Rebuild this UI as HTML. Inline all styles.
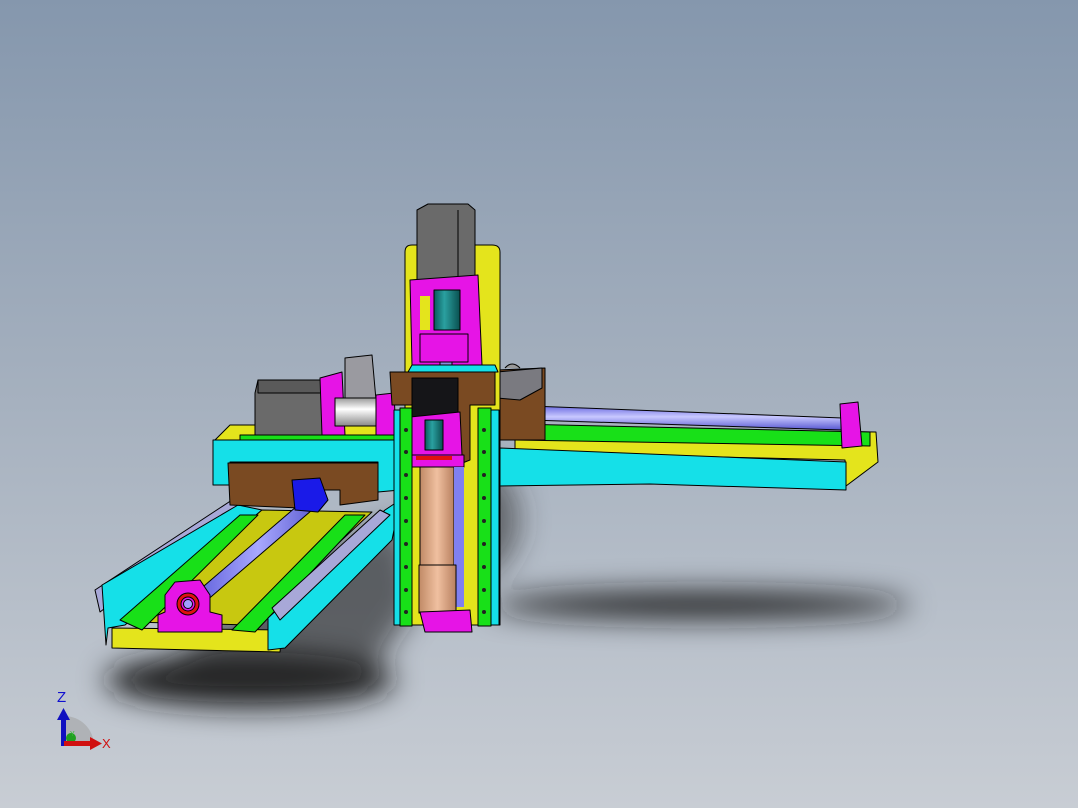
<!DOCTYPE html>
<html><head><meta charset="utf-8"><style>
html,body{margin:0;padding:0;width:1078px;height:808px;overflow:hidden}
svg{display:block}
</style></head><body>
<svg width="1078" height="808" viewBox="0 0 1078 808" xmlns="http://www.w3.org/2000/svg" stroke="#000" stroke-width="1" stroke-linejoin="round">
<defs>
<linearGradient id="bg" x1="0" y1="0" x2="0" y2="1">
<stop offset="0" stop-color="#8597ad"/><stop offset="0.5" stop-color="#a6b1bf"/><stop offset="1" stop-color="#c8cdd4"/></linearGradient>
<filter id="bl" filterUnits="userSpaceOnUse" x="0" y="0" width="1078" height="808"><feGaussianBlur stdDeviation="14"/></filter>
<linearGradient id="rod" x1="0" y1="0" x2="0" y2="1"><stop offset="0" stop-color="#6b6be0"/><stop offset="0.45" stop-color="#c8c8ff"/><stop offset="1" stop-color="#5656d0"/></linearGradient>
<linearGradient id="rod2" x1="0" y1="0" x2="1" y2="0"><stop offset="0" stop-color="#5a5ad8"/><stop offset="0.5" stop-color="#a8a8ff"/><stop offset="1" stop-color="#5050c8"/></linearGradient>
<linearGradient id="cyl" x1="0" y1="0" x2="0" y2="1"><stop offset="0" stop-color="#999"/><stop offset="0.4" stop-color="#fff"/><stop offset="1" stop-color="#888"/></linearGradient>
<linearGradient id="teal" x1="0" y1="0" x2="1" y2="0"><stop offset="0" stop-color="#0a5a5a"/><stop offset="0.4" stop-color="#2aa0a0"/><stop offset="1" stop-color="#0a5050"/></linearGradient>
<linearGradient id="cop" x1="0" y1="0" x2="1" y2="0"><stop offset="0" stop-color="#c08a66"/><stop offset="0.5" stop-color="#f0c0a0"/><stop offset="1" stop-color="#b88060"/></linearGradient>
</defs>
<rect width="1078" height="808" fill="url(#bg)" stroke="none"/>
<!-- shadows -->
<g filter="url(#bl)" stroke="none">
<ellipse cx="250" cy="680" rx="145" ry="28" fill="#1a1a1a" opacity="0.9"/>
<polygon points="130,690 300,560 400,520 420,600 360,690" fill="#1a1a1a" opacity="0.6"/>
<ellipse cx="700" cy="605" rx="210" ry="14" fill="#1a1a1a" opacity="0.9"/>
<ellipse cx="470" cy="520" rx="50" ry="60" fill="#333" opacity="0.6"/>
</g>

<!-- right arm -->
<polygon points="515,428 876,432 878,462 846,486 845,460 515,452" fill="#e4e41c"/>
<polygon points="515,424 870,432 870,446 515,440" fill="#18e018"/>
<polygon points="500,448 846,462 846,490 650,484 498,486" fill="#15e0e8"/>
<polygon points="530,406 842,418 842,430 530,420" fill="url(#rod)"/>
<polygon points="840,404 858,402 862,446 842,448" fill="#e614e6"/>
<polygon points="497,370 545,368 545,440 497,440" fill="#7a4a22"/>
<polygon points="497,372 542,368 542,388 520,400 497,398" fill="#7a7a80"/>
<path d="M505,368 Q512,360 520,368" fill="#999"/>

<!-- left top: motor etc -->
<polygon points="230,425 400,425 400,442 213,442" fill="#e4e41c"/>
<polygon points="240,435 400,435 400,442 240,442" fill="#18e018"/>
<polygon points="345,358 372,355 376,400 345,400" fill="#9a9aa0"/>
<polygon points="258,380 322,380 325,435 255,435 255,393" fill="#6a6a6a"/>
<polygon points="258,380 322,380 322,393 258,393" fill="#5a5a5a"/>
<polygon points="320,378 342,372 345,435 322,435" fill="#e614e6"/>
<rect x="335" y="398" width="42" height="28" fill="url(#cyl)"/>
<polygon points="376,395 394,393 396,435 376,435" fill="#e614e6"/>

<!-- left arm -->
<polygon points="95,590 232,500 240,505 100,612" fill="#a8a8d8"/>
<polygon points="102,585 238,505 262,510 125,625 108,628 106,645" fill="#15e0e8"/>
<polygon points="112,628 282,630 280,652 112,648" fill="#e4e41c"/>
<polygon points="130,622 262,510 372,512 250,625" fill="#c8c810"/>
<polygon points="120,620 240,515 258,515 142,630" fill="#18e018"/>
<polygon points="232,630 345,515 365,515 255,632" fill="#18e018"/>
<polygon points="268,618 385,510 400,500 392,540 285,648 268,650" fill="#15e0e8"/>
<polygon points="272,608 380,510 390,515 280,620" fill="#a8a8d8"/>
<polygon points="190,598 318,488 326,498 198,608" fill="url(#rod2)"/>
<polygon points="165,595 175,582 200,580 210,595 210,612 222,615 222,632 158,632 158,615 165,612" fill="#e614e6"/>
<circle cx="188" cy="604" r="11" fill="#e01010"/><circle cx="188" cy="604" r="7" fill="#e614e6"/><circle cx="188" cy="604" r="4.5" fill="#a0a0ff"/>
<!-- cross beam -->
<polygon points="213,440 400,440 400,490 378,492 378,462 230,462 230,485 213,485" fill="#15e0e8"/>
<polygon points="228,463 378,463 378,500 340,505 340,490 300,490 300,508 230,505" fill="#7a4a22"/>
<polygon points="292,480 320,478 328,500 318,512 295,510" fill="#1a1ae8"/>

<!-- center column -->
<path d="M405,252 Q405,245 412,245 L492,245 Q500,245 500,252 L500,625 L405,625 Z" fill="#e4e41c"/>
<polygon points="417,210 428,204 468,204 475,210 475,282 417,282" fill="#6a6a6a"/>
<line x1="458" y1="210" x2="458" y2="280"/>
<polygon points="410,280 478,275 482,365 412,365" fill="#e614e6"/>
<rect x="420" y="296" width="10" height="34" fill="#e4e41c" stroke="none"/>
<rect x="434" y="290" width="26" height="40" fill="url(#teal)"/>
<rect x="420" y="334" width="48" height="28" fill="#e614e6"/>
<rect x="440" y="362" width="12" height="12" fill="#8888e0"/>
<polygon points="408,372 412,365 495,365 498,372" fill="#15e0e8"/>
<polygon points="390,372 495,372 495,405 470,405 470,460 455,466 420,466 420,405 392,405" fill="#7a4a22"/>
<rect x="412" y="378" width="46" height="40" fill="#151518"/>
<polygon points="410,417 460,412 462,455 455,466 418,466 410,455" fill="#e614e6"/>
<rect x="425" y="420" width="18" height="30" fill="url(#teal)"/>
<rect x="394" y="410" width="8" height="215" fill="#15e0e8"/>
<rect x="490" y="410" width="9" height="215" fill="#15e0e8"/>
<rect x="400" y="408" width="12" height="218" fill="#18e018"/>
<rect x="478" y="408" width="13" height="218" fill="#18e018"/>
<g fill="#222" stroke="none">
<circle cx="406" cy="430" r="2"/><circle cx="406" cy="452" r="2"/><circle cx="406" cy="475" r="2"/><circle cx="406" cy="498" r="2"/><circle cx="406" cy="521" r="2"/><circle cx="406" cy="544" r="2"/><circle cx="406" cy="567" r="2"/><circle cx="406" cy="590" r="2"/><circle cx="406" cy="612" r="2"/>
<circle cx="484" cy="430" r="2"/><circle cx="484" cy="452" r="2"/><circle cx="484" cy="475" r="2"/><circle cx="484" cy="498" r="2"/><circle cx="484" cy="521" r="2"/><circle cx="484" cy="544" r="2"/><circle cx="484" cy="567" r="2"/><circle cx="484" cy="590" r="2"/><circle cx="484" cy="612" r="2"/>
</g>
<rect x="412" y="455" width="52" height="12" fill="#e614e6"/>
<rect x="416" y="456" width="36" height="4" fill="#e01010" stroke="none"/>
<rect x="420" y="467" width="34" height="100" fill="url(#cop)"/>
<rect x="454" y="467" width="10" height="140" fill="#8080f0" stroke="none"/>
<rect x="419" y="565" width="37" height="48" fill="url(#cop)"/>
<polygon points="420,612 470,610 472,632 425,632" fill="#e614e6"/>

<!-- axes icon -->
<path d="M64,745 L64,716 A30,30 0 0 1 94,745 Z" fill="#a0a0a0" opacity="0.55" stroke="none"/>
<circle cx="71" cy="738" r="5" fill="#20a020" stroke="none"/>
<rect x="61" y="718" width="5" height="28" fill="#1010c0" stroke="none"/>
<polygon points="57,720 63.5,708 70,720" fill="#1010c0" stroke="none"/>
<rect x="64" y="741" width="28" height="5" fill="#d01010" stroke="none"/>
<polygon points="90,737 102,743.5 90,750" fill="#d01010" stroke="none"/>
<text x="57" y="702" font-family="Liberation Sans, sans-serif" font-size="15" fill="#1010d0" stroke="none">Z</text>
<text x="102" y="748" font-family="Liberation Sans, sans-serif" font-size="13" fill="#d01010" stroke="none">X</text>
<text x="70" y="736" font-family="Liberation Sans, sans-serif" font-size="7" fill="#30c030" stroke="none">Y</text>
</svg>
</body></html>
